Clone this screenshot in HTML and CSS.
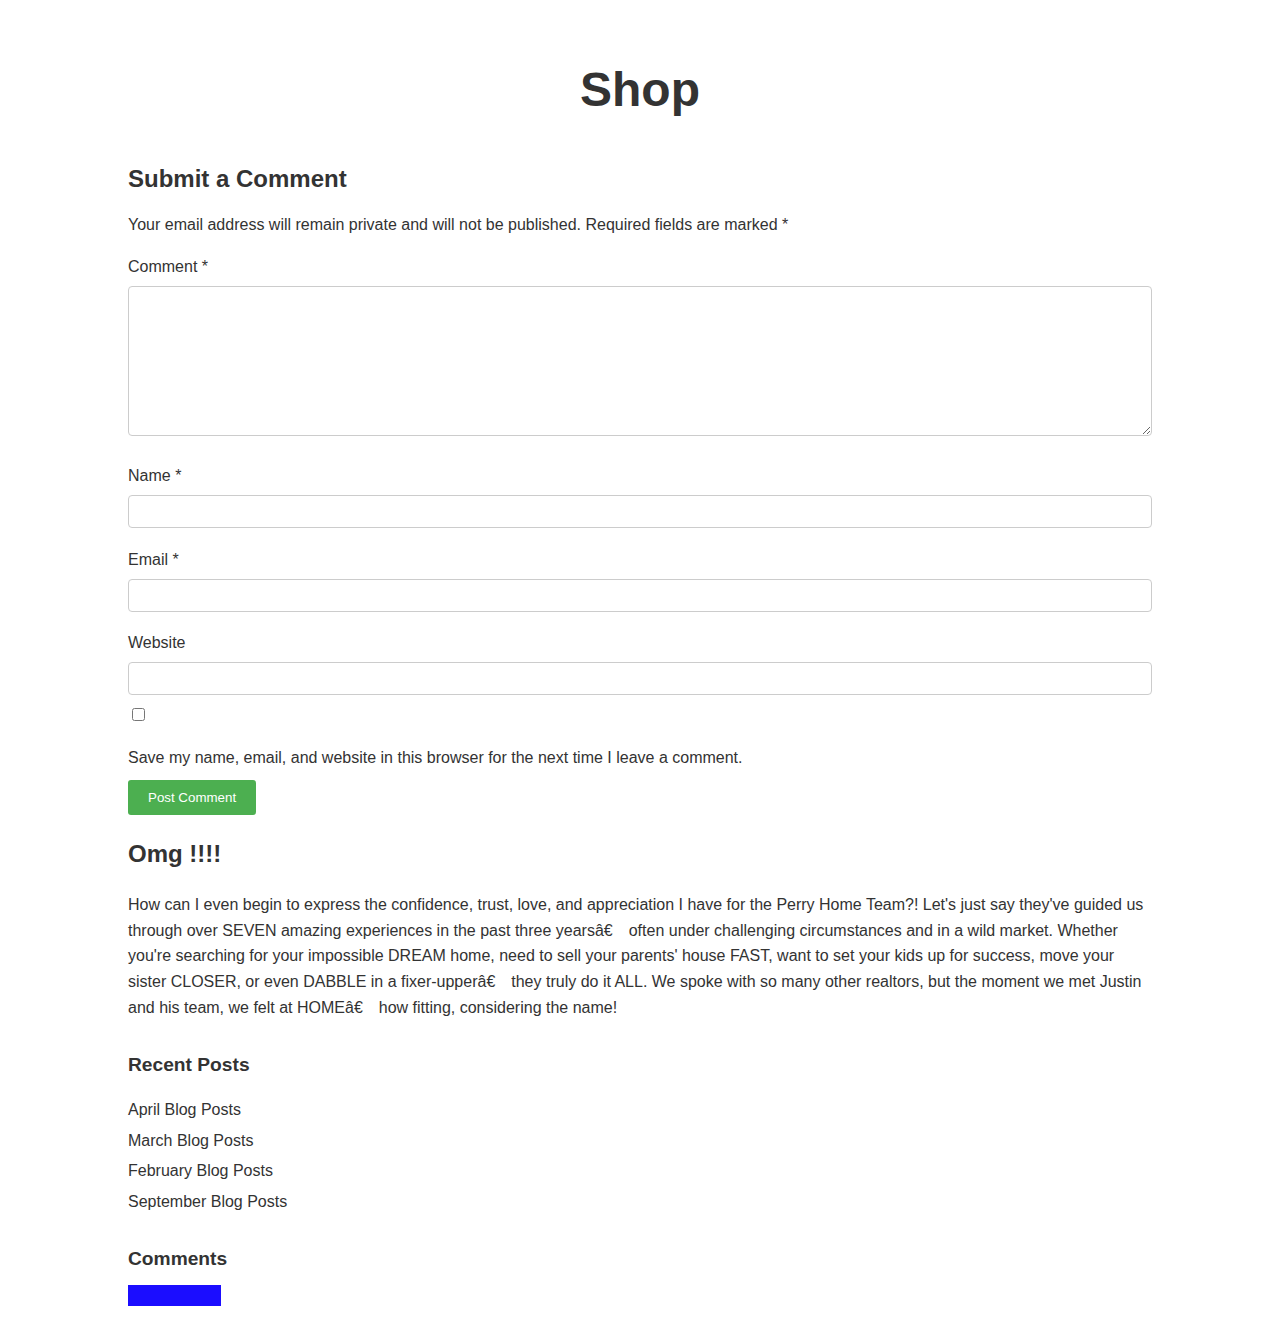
FILE: index.html
```html
<!DOCTYPE html>
<html lang="en">
<head>
<meta charset="utf-8">
<title>Shop</title>
<link rel="stylesheet" href="styles.css">
</head>
<body>
<main class="page">
  <h1 class="page-title">Shop</h1>

  <section class="comment-form">
    <h3 class="form-title">Submit a Comment</h3>
    <p class="notice">Your email address will remain private and will not be published. Required fields are marked *</p>

    <div class="field field-comment">
      <label class="field-label" for="comment">Comment *</label>
      <textarea id="comment" class="textarea"></textarea>
    </div>
    <div class="field field-after-comment">
      <label class="field-label" for="name">Name *</label>
      <input id="name" class="input" type="text">
    </div>
    <div class="field">
      <label class="field-label" for="email">Email *</label>
      <input id="email" class="input" type="email">
    </div>
    <div class="field">
      <label class="field-label" for="website">Website</label>
      <input id="website" class="input" type="url">
    </div>

    <input class="checkbox" type="checkbox" id="save">
    <p class="save-text">Save my name, email, and website in this browser for the next time I leave a comment.</p>
    <button class="submit" type="button">Post Comment</button>
  </section>

  <article class="testimonial">
    <h2 class="testimonial-title">Omg !!!!</h2>
    <p class="testimonial-body">How can I even begin to express the confidence, trust, love, and appreciation I have for the Perry Home Team?! Let's just say they've guided us through over SEVEN amazing experiences in the past three yearsâ€&#8195;often under challenging circumstances and in a wild market. Whether you're searching for your impossible DREAM home, need to sell your parents' house FAST, want to set your kids up for success, move your sister CLOSER, or even DABBLE in a fixer-upperâ€&#8195;they truly do it ALL. We spoke with so many other realtors, but the moment we met Justin and his team, we felt at HOMEâ€&#8195;how fitting, considering the name!</p>
  </article>

  <aside class="widget widget-posts">
    <h4 class="widget-title">Recent Posts</h4>
    <ul class="post-list">
      <li>April Blog Posts</li>
      <li>March Blog Posts</li>
      <li>February Blog Posts</li>
      <li>September Blog Posts</li>
    </ul>
  </aside>

  <aside class="widget widget-comments">
    <h4 class="widget-title">Comments</h4>
    <div class="blue-block"></div>
  </aside>
</main>
</body>
</html>
```

FILE: styles.css
```css
* { box-sizing: border-box; }

body {
  margin: 0;
  background: #fff;
  color: #333;
  font-family: "Liberation Sans", Arial, Helvetica, sans-serif;
  font-size: 16px;
  line-height: 25.6px;
}

.page {
  width: 1024px;
  margin: 0 auto;
  padding-bottom: 28px;
}

.page-title {
  margin: 62px 0 0;
  font-size: 48px;
  line-height: 56px;
  font-weight: 700;
  text-align: center;
  color: #333;
}

.form-title {
  margin: 45.5px 0 0;
  font-size: 24px;
  line-height: 29px;
  font-weight: 700;
}

.notice {
  margin: 19.5px 0 0;
}

.field {
  margin-top: 18.4px;
}

.field-comment {
  margin-top: 16.4px;
}

.field-after-comment {
  margin-top: 27.2px;
}

.field-label {
  display: block;
  margin-bottom: 6.4px;
}

.textarea,
.input {
  display: block;
  width: 100%;
  border: 1px solid #ccc;
  border-radius: 4px;
  background: #fff;
  font-family: inherit;
  font-size: 16px;
  color: #333;
  margin: 0;
}

.textarea {
  height: 150px;
  padding: 8px;
  resize: vertical;
}

.input {
  height: 33px;
  padding: 4px 8px;
}

.checkbox {
  display: block;
  width: 13px;
  height: 13px;
  margin: 13px 0 0 4px;
}

.save-text {
  margin: 24.2px 0 0;
}

.submit {
  display: block;
  margin-top: 9px;
  height: 35px;
  padding: 0 20px;
  border: 0;
  border-radius: 3px;
  background: #4caf50;
  color: #fff;
  font-family: "Liberation Sans", Arial, sans-serif;
  font-size: 13.333px;
  cursor: pointer;
}

.testimonial-title {
  margin: 25px 0 0;
  font-size: 24px;
  line-height: 28.8px;
  font-weight: 700;
}

.testimonial-body {
  margin: 23.8px 0 0;
}

.widget {
  margin-top: 33px;
}

.widget-title {
  margin: 0;
  font-size: 19.2px;
  line-height: 23px;
  font-weight: 700;
}

.post-list {
  list-style: none;
  margin: 20.7px 0 0;
  padding: 0;
}

.post-list li {
  margin-bottom: 5px;
}

.widget-comments {
  margin-top: 32.7px;
}

.blue-block {
  width: 93px;
  height: 21px;
  margin-top: 15.5px;
  background: #1b0dff;
}
```
